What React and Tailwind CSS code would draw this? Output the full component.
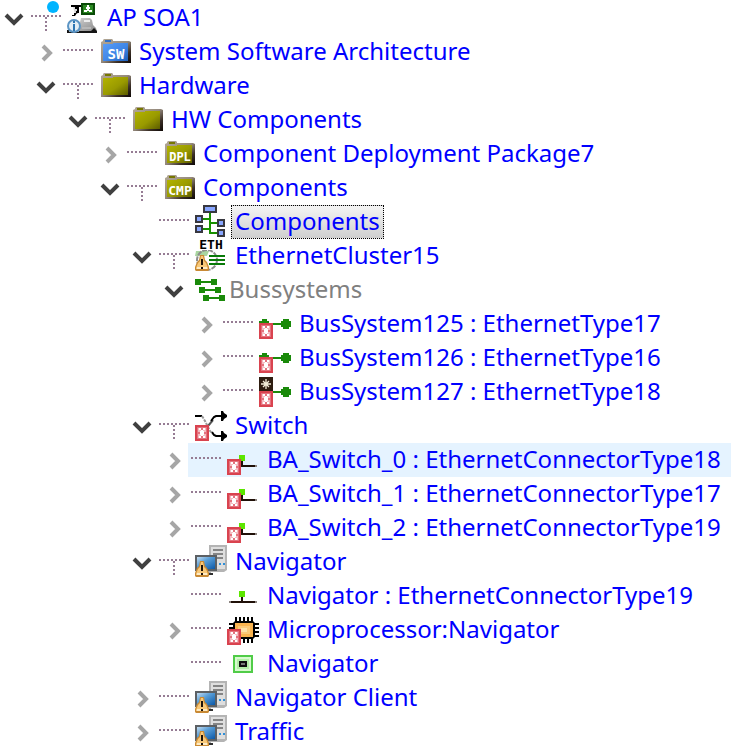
import { useState } from "react";

const MONO = "'DejaVu Sans Mono', 'Liberation Mono', monospace";

function Warning() {
  return (
    <g>
      <path d="M5 16h4l1 5 2 2 2 5v3l-1 1H1l-1-1v-3l2-5 2-2z" fill="#c98a35" />
      <path d="M6 17h2l1 5 2 2 2 5v1H1v-1l2-5 2-2z" fill="#f8c878" />
      <path d="M2 28h10v2H2z" fill="#fdebc6" />
      <path d="M6 20h2v6H6zM6 28h2v2H6z" fill="#1c1208" />
    </g>
  );
}

function ErrorMark() {
  return (
    <g shapeRendering="crispEdges">
      <rect x="0" y="16" width="14" height="16" fill="#d9434f" />
      <rect x="2" y="18" width="10" height="12" fill="#e4727e" />
      <path d="M3 19h3v10H3zM8 19h3v10H8z" fill="#f3bcc2" />
      <path d="M4 19h2v2H4zM8 19h2v2H8zM6 21h2v6H6zM5 22h4v4H5zM4 27h2v2H4zM8 27h2v2H8z" fill="#fff" />
      <path d="M3 23h2v2H3zM9 23h2v2H9zM6 19h2v2H6zM6 27h2v2H6z" fill="#e4727e" />
    </g>
  );
}

function Folder({ kind, text, size = 12 }) {
  const blue = kind === "blue";
  const id = blue ? "folder-blue" : "folder-olive";
  return (
    <g>
      <defs>
        <linearGradient id={id} x1="0" y1="0" x2="1" y2="1">
          <stop offset="0" stopColor={blue ? "#5a9df8" : "#b4b400"} />
          <stop offset="0.55" stopColor={blue ? "#3f86e6" : "#999a00"} />
          <stop offset="1" stopColor={blue ? "#1f5fb8" : "#5c5c00"} />
        </linearGradient>
        <linearGradient id={id + "-edge"} x1="0" y1="0" x2="1" y2="1">
          <stop offset="0" stopColor="#b5aa98" />
          <stop offset="0.5" stopColor="#94897c" />
          <stop offset="0.75" stopColor="#3c3028" />
          <stop offset="1" stopColor="#0c0604" />
        </linearGradient>
      </defs>
      <path d="M2 7l2-1V5l1-1h8l1 1v1h16l2 1v21H2z" fill={"url(#" + id + "-edge)"} />
      <path d="M6 5h6v2H6z" fill={blue ? "#2f6fc8" : "#777700"} />
      <path d="M4 9h10V8h15v18H4z" fill={"url(#" + id + ")"} />
      {text && (
        <text x="17" y="24" textAnchor="middle" fontFamily={MONO} fontWeight="bold" fontSize={size} fill="#fff">
          {text}
        </text>
      )}
    </g>
  );
}

function Project() {
  return (
    <g>
      <defs>
        <linearGradient id="rock" x1="0" y1="0" x2="1" y2="1">
          <stop offset="0" stopColor="#e0e0e0" />
          <stop offset="1" stopColor="#808080" />
        </linearGradient>
      </defs>
      <path d="M6 6h5v7H8z" fill="#d8d8d8" />
      <path d="M4 4h10v2h-2v6h-2l-2 3H5v-1h2v-2h2v-2h1V8H8V6H4z" fill="#000" />
      <path d="M10 24l3-3 1-4h9l2 2 1 5 3 3 1 4v1H1v-3z" fill="url(#rock)" />
      <path d="M0 29h2v2h10v-1h12l3-3 3 3v2H0z" fill="#151515" />
      <path d="M15 26h9v2h-9z" fill="#b8b8b8" />
      <path d="M17 19h6v2h-6z" fill="#ececec" />
      <g shapeRendering="crispEdges">
        <rect x="14" y="2" width="14" height="12" fill="#0a4a08" />
        <rect x="16" y="4" width="10" height="8" fill="#2c8a22" />
        <path d="M20 4h2v2h1v2h-1v1h3v2h-3v-1h-2v1h-3V9h3V8h-1V6h1z" fill="#fff" />
      </g>
      <circle cx="7" cy="25" r="6" fill="#e3eef6" stroke="#5b94c4" strokeWidth="2" />
      <path d="M6 20h2v2H6zM6 23h2v7H6z" fill="#2d76b4" />
    </g>
  );
}

function Diagram() {
  const boxes = [[8, 0, 14], [0, 10, 8], [0, 20, 8], [22, 14, 8], [22, 24, 8]];
  return (
    <g shapeRendering="crispEdges">
      <path d="M14 8h2v9h6v2h-6v8h6v2h-8v-4H8v-2h6v-8H8v-2h6z" fill="#189000" />
      {boxes.map(([x, y, w]) => (
        <g key={x + "-" + y}>
          <rect x={x} y={y} width={w} height="8" fill="#383840" />
          <rect x={x + 2} y={y + 2} width={w - 4} height="4" fill="#88a6ff" />
        </g>
      ))}
    </g>
  );
}

function Cluster() {
  return (
    <g>
      <path d="M1 12h13l-2 5H0z" fill="#a9d6a0" />
      <circle cx="12" cy="21" r="10" fill="none" stroke="#8c8c8c" strokeWidth="2" strokeDasharray="5 1" />
      <path d="M14 16h16v2H14zM14 20h16v2H14zM14 24h16v2H14z" fill="#087a08" />
      <rect x="5" y="0" width="22" height="11" fill="#fff" />
      <text x="16" y="10" textAnchor="middle" fontFamily={MONO} fontWeight="bold" fontSize="13" fill="#000">ETH</text>
      <Warning />
    </g>
  );
}

function Buses() {
  return (
    <g fill="#1a8a0a" shapeRendering="crispEdges">
      <path d="M0 6h6v2h10V6h6v6h-6v-2H6v2H0z" />
      <path d="M4 14h6v2h10v-2h6v6h-6v-2H10v2H4z" />
      <path d="M8 22h6v2h10v-2h6v6h-6v-2H14v2H8z" />
    </g>
  );
}

function Bus({ star }) {
  return (
    <g>
      <g fill="#1a8a0a" shapeRendering="crispEdges">
        <path d="M2 14h1v-2h5v2h2v4H0v-4z" />
        <path d="M10 16h12v-2h2v-2h6v2h2v6h-2v2h-6v-2h-2v-2H10z" />
      </g>
      {star && (
        <g>
          <rect x="0" y="2" width="14" height="14" fill="#2e1c10" />
          <path d="M7 4v10M2 9h10M4 6l6 6M10 6l-6 6" stroke="#f4ecd8" strokeWidth="1.3" />
        </g>
      )}
      <ErrorMark />
    </g>
  );
}

function Switch() {
  return (
    <g>
      <path d="M0 7h7" stroke="#000" strokeWidth="2" />
      <path d="M7 7l3 5 5 10 3 3" fill="none" stroke="#999" strokeWidth="2" strokeDasharray="3 1" />
      <path d="M13 17l5-6" stroke="#555" strokeWidth="2" />
      <path d="M16 12l3-4 2-1h6M17 23l2 3 2 1h6" fill="none" stroke="#000" strokeWidth="2" />
      <path d="M26 2h2l1 2 3 2v2l-3 2-1 2h-2zM26 22h2l1 2 3 2v2l-3 2-1 2h-2z" fill="#000" />
      <ErrorMark />
    </g>
  );
}

function Connector({ error }) {
  return (
    <g shapeRendering="crispEdges">
      <path d="M4 22h10v-4h2v4h12v2H4z" fill="#201008" />
      <path d="M2 22h2v2H2zM28 22h2v2h-2z" fill="#8c8480" />
      <rect x="12" y="12" width="6" height="6" fill="#5ce600" />
      {error && <ErrorMark />}
    </g>
  );
}

function Computer() {
  return (
    <g>
      <defs>
        <linearGradient id="screen" x1="0" y1="0" x2="1" y2="1">
          <stop offset="0" stopColor="#c4dcf0" />
          <stop offset="0.4" stopColor="#5a9fd8" />
          <stop offset="1" stopColor="#0a58a8" />
        </linearGradient>
      </defs>
      <path d="M14 0h18v25l-3 2H16l-2-2z" fill="#b4b4b4" />
      <path d="M16 2h14v22H16z" fill="#dedede" />
      <path d="M18 4h10v2H18zM18 8h10v2H18zM18 12h10v2H18z" fill="#858585" />
      <path d="M24 18h2v2h-2zM28 18h2v2h-2z" fill="#2f8fd8" />
      <path d="M0 10h22v16H0z" fill="#5c6064" />
      <path d="M2 12h18v12H2z" fill="url(#screen)" />
      <path d="M10 28h8v2h-8z" fill="#303030" />
      <path d="M12 26h4v2h-4z" fill="#b0b0b0" />
      <Warning />
    </g>
  );
}

function Chip() {
  return (
    <g>
      <path d="M8 6h20M8 28h20" stroke="#000" strokeWidth="4" strokeDasharray="2 2" />
      <path d="M4 10v16M30 10v16" stroke="#000" strokeWidth="4" strokeDasharray="2 2" />
      <path d="M8 8h18l2 2v14l-2 2H8l-2-2V10z" fill="#000" />
      <rect x="8" y="10" width="18" height="14" fill="#fab450" />
      <rect x="11" y="13" width="12" height="8" fill="#fbc878" />
      <rect x="14" y="15" width="6" height="4" fill="#fde0a8" />
      <ErrorMark />
    </g>
  );
}

function Port() {
  return (
    <g shapeRendering="crispEdges">
      <rect x="6" y="8" width="20" height="18" fill="#50cc48" />
      <rect x="8" y="10" width="16" height="14" fill="#d8fad0" />
      <rect x="10" y="12" width="12" height="10" fill="#b4f0a8" />
      <rect x="12" y="14" width="8" height="6" fill="#101010" />
      <rect x="14" y="16" width="4" height="2" fill="#787878" />
    </g>
  );
}

const computer = <Computer />;

const TREE = {
  label: "AP SOA1", icon: <Project />, marked: true, children: [
    { label: "System Software Architecture", icon: <Folder kind="blue" text="SW" size={14} />, closed: true },
    { label: "Hardware", icon: <Folder />, children: [
      { label: "HW Components", icon: <Folder />, children: [
        { label: "Component Deployment Package7", icon: <Folder text="DPL" />, closed: true },
        { label: "Components", icon: <Folder text="CMP" size={13} />, children: [
          { label: "Components", icon: <Diagram />, selected: true },
          { label: "EthernetCluster15", icon: <Cluster />, children: [
            { label: "Bussystems", icon: <Buses />, group: true, children: [
              { label: "BusSystem125 : EthernetType17", icon: <Bus />, closed: true },
              { label: "BusSystem126 : EthernetType16", icon: <Bus />, closed: true },
              { label: "BusSystem127 : EthernetType18", icon: <Bus star />, closed: true },
            ] },
          ] },
          { label: "Switch", icon: <Switch />, children: [
            { label: "BA_Switch_0 : EthernetConnectorType18", icon: <Connector error />, closed: true, hovered: true },
            { label: "BA_Switch_1 : EthernetConnectorType17", icon: <Connector error />, closed: true },
            { label: "BA_Switch_2 : EthernetConnectorType19", icon: <Connector error />, closed: true },
          ] },
          { label: "Navigator", icon: computer, children: [
            { label: "Navigator : EthernetConnectorType19", icon: <Connector /> },
            { label: "Microprocessor:Navigator", icon: <Chip />, closed: true },
            { label: "Navigator", icon: <Port /> },
          ] },
          { label: "Navigator Client", icon: computer, closed: true },
          { label: "Traffic", icon: computer, closed: true },
        ] },
      ] },
    ] },
  ],
};

function Toggle({ open, label, onClick }) {
  return (
    <button type="button" aria-label={(open ? "Collapse " : "Expand ") + label} onClick={onClick} className="h-[34px] w-7 shrink-0">
      <svg viewBox="0 0 28 34" className="h-[34px] w-7" fill="none" strokeWidth="4">
        {open ? <path d="M6 14l8 8 8-8" stroke="#404040" /> : <path d="M11 11l7 7-7 7" stroke="#a6a6a6" />}
      </svg>
    </button>
  );
}

function Lines({ branch, marked }) {
  return (
    <svg viewBox="0 0 39 34" className="h-[34px] w-[39px] shrink-0" shapeRendering="crispEdges">
      <path d="M3 15h30" stroke="#967c94" strokeWidth="2" strokeDasharray="2 2" />
      {branch && <path d="M18 16v14" stroke="#967c94" strokeWidth="2" strokeDasharray="2 2" />}
      {marked && <circle cx="25" cy="6" r="6" fill="#00b4ff" shapeRendering="auto" />}
    </svg>
  );
}

function labelStyle(node) {
  if (node.selected) return "ml-1 border-dotted border-black bg-linear-to-b from-[#f4f4f4] to-[#cfcfcf] px-[3px] text-[#0000ff]";
  if (node.group) return "border-transparent px-px text-[#808080]";
  return "ml-1 border-transparent px-[3px] text-[#0000ff]";
}

function Item({ node }) {
  const [open, setOpen] = useState(!node.closed);
  const expandable = Boolean(node.children || node.closed);
  return (
    <li role="treeitem" aria-expanded={expandable ? open : undefined} aria-selected={Boolean(node.selected)}>
      <div className="flex h-[34px] pr-1">
        {expandable ? <Toggle open={open} label={node.label} onClick={() => setOpen(!open)} /> : <span className="w-7 shrink-0" />}
        <div className={node.hovered ? "flex flex-1 bg-[#e5f3ff]" : "flex flex-1"}>
          {node.group ? <span className="w-[7px] shrink-0" /> : <Lines branch={expandable && open} marked={node.marked} />}
          <svg viewBox="0 0 32 34" className="h-[34px] w-8 shrink-0 overflow-visible" aria-hidden="true">{node.icon}</svg>
          <span className={"border pb-0.5 " + labelStyle(node)}>{node.label}</span>
        </div>
      </div>
      {open && node.children && (
        <ul role="group" className="pl-8">
          {node.children.map((child, i) => <Item key={i} node={child} />)}
        </ul>
      )}
    </li>
  );
}

export default function App() {
  return (
    <main className="h-screen overflow-hidden bg-white pt-px font-['Noto_Sans','Open_Sans',sans-serif] text-[24px] leading-[30px] whitespace-nowrap">
      <ul role="tree" aria-label="Model tree">
        <Item node={TREE} />
      </ul>
    </main>
  );
}
